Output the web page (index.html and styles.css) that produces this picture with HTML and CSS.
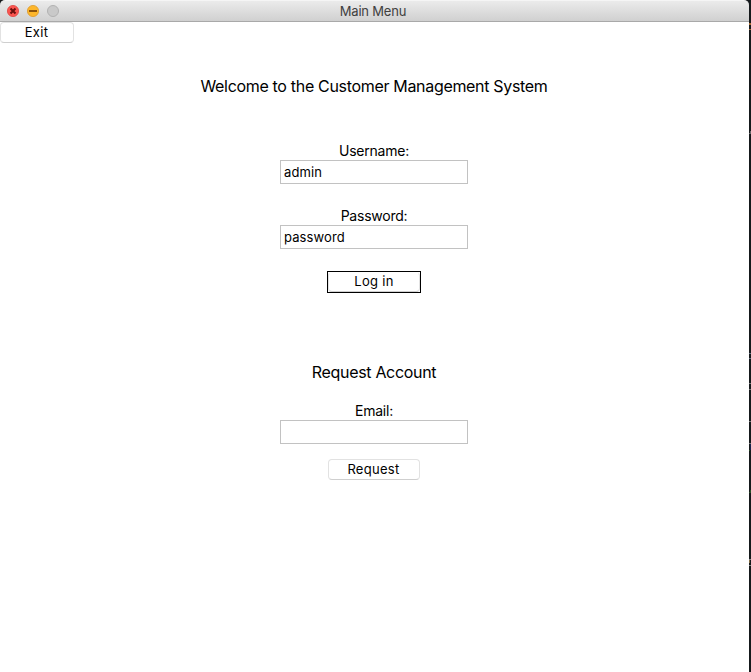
FILE: index.html
```html
<!DOCTYPE html>
<html lang="en">
<head>
<meta charset="utf-8">
<title>Main Menu</title>
<link rel="stylesheet" href="styles.css">
</head>
<body>
<div class="window">
  <header class="titlebar">
    <div class="controls">
      <svg class="control" viewBox="0 0 12 12"><circle cx="6" cy="6" r="5.6" fill="#fc5550" stroke="#de4642" stroke-width=".8"/><path d="M3.5 3.5l5 5M8.5 3.5l-5 5" stroke="#69100d" stroke-width="2"/></svg>
      <svg class="control" viewBox="0 0 12 12"><circle cx="6" cy="6" r="5.6" fill="#fdb62b" stroke="#dd9b2b" stroke-width=".8"/><path d="M2 6h8" stroke="#8b520b" stroke-width="2"/></svg>
      <svg class="control" viewBox="0 0 12 12"><circle cx="6" cy="6" r="5.5" fill="#c9c9c9" stroke="#b1b1b1" stroke-width="1"/></svg>
    </div>
    <span class="title">Main Menu</span>
  </header>
  <main class="content">
    <button class="button exit">Exit</button>
    <h1 class="heading welcome">Welcome to the Customer Management System</h1>
    <label class="label username" for="username">Username:</label>
    <input class="field" id="username" type="text" value="admin">
    <label class="label password" for="password">Password:</label>
    <input class="field" id="password" type="text" value="password">
    <div class="focus"><button class="button login">Log in</button></div>
    <h2 class="heading account">Request Account</h2>
    <label class="label email" for="email">Email:</label>
    <input class="field" id="email" type="text">
    <button class="button request">Request</button>
  </main>
</div>
<svg class="backdrop" viewBox="0 0 2 672">
  <path d="M0 23h2v2H0zM0 29h2v1H0z" fill="#a66b35"/>
  <path d="M1 131h1v3H0v-1h1z" fill="#666"/>
  <path d="M0 353h2v1H0zM0 358h2v1H0z" fill="#647080"/>
  <path d="M0 383h2v1H0zM0 389h2v1H0zM0 421h2v1H0z" fill="#777"/>
  <path d="M0 443h2v1H0z" fill="#777"/><path d="M1 444h1v6H1z" fill="#18234d"/>
  <path d="M0 450h1v1H0zM1 490h1v3H0v-1h1z" fill="#285026"/>
  <path d="M0 559h2v1H0zM0 565h2v1H0z" fill="#888"/><path d="M0 560h1v3H0z" fill="#806b43"/>
</svg>
</body>
</html>
```
FILE: styles.css
```css
* { box-sizing: border-box; }
body {
  margin: 0;
  display: flex;
  height: 672px;
  overflow: hidden;
  background: #15191b;
  color: #000;
  font-family: Inter, "Liberation Sans", sans-serif;
}
.window {
  width: 749px;
  height: 672px;
  background: linear-gradient(#15191b 10px, #fff 10px);
  border-radius: 5px 5px 0 0;
}
.backdrop { width: 2px; height: 672px; }
.titlebar {
  display: grid;
  grid-template-columns: 1fr auto 1fr;
  align-items: center;
  height: 22px;
  padding-left: 7px;
  padding-right: 10px;
  background: linear-gradient(#ebebeb, #d0d0d0);
  border-top: 1px solid #f5f5f5;
  border-bottom: 1px solid #a9a9a9;
  border-radius: 5px 5px 0 0;
}
.controls { display: flex; gap: 8px; }
.control { width: 12px; height: 12px; }
.title { color: #404040; font-size: 13px; line-height: 20px; letter-spacing: -.2px; }
.content {
  display: flex;
  flex-direction: column;
  align-items: center;
  padding-right: 1px;
}
.button {
  height: 21px;
  padding: 0 1px 1px 0;
  border: 1px solid #e2e2e2;
  border-bottom-color: #cfcfcf;
  border-radius: 4px;
  background: #fff;
  color: #000;
  font: 13px/18px Inter, "Liberation Sans", sans-serif;
  letter-spacing: .3px;
}
.exit { align-self: flex-start; width: 74px; }
.heading { margin: 0; font-size: 16px; line-height: 20px; font-weight: 400; letter-spacing: -.32px; }
.welcome { margin-top: 33px; }
.label { font-size: 14px; line-height: 18px; letter-spacing: -.24px; }
.username { margin-top: 46px; }
.password { margin-top: 23px; }
.field {
  width: 188px;
  height: 24px;
  padding: 0 3px;
  border: 1px solid #c2c2c2;
  border-radius: 0;
  outline: 0;
  background: #fff;
  color: #000;
  font: 13px/20px Inter, "Liberation Sans", sans-serif;
  letter-spacing: .1px;
}
.focus {
  width: 94px;
  height: 22px;
  margin-top: 22px;
  border: 1px solid #000;
  display: flex;
}
.login { width: 92px; height: 20px; padding: 0 0 2px; line-height: 17px; border-top-color: #fff; }
.account { margin-top: 69px; }
.email { margin-top: 20px; }
.request { width: 92px; margin-top: 15px; }
```
